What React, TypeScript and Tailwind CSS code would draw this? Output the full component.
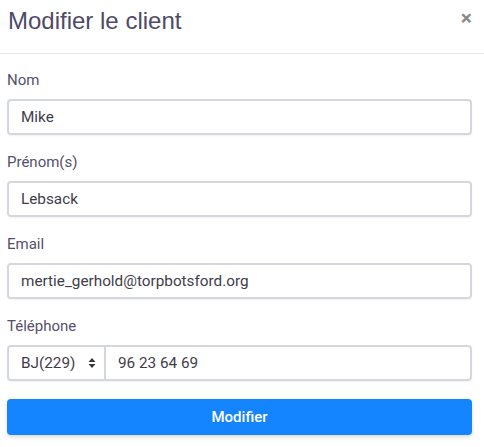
import React from "react";

function Field({ label, value }: { label: string; value: string }) {
  return (
    <div className="flex flex-col">
      <label className="text-[15px] leading-[21px] text-[#55506a] mb-[8px]">{label}</label>
      <div className="h-[36px] border-2 border-[#d4d8de] rounded-[4px] flex items-center px-[12px] text-[15.3px] text-[#3f3d4a] shadow-[0_1px_2px_rgba(0,0,0,0.06)]">
        {value}
      </div>
    </div>
  );
}

export default function App() {
  return (
    <div className="w-[484px] h-[447px] bg-white" style={{ fontFamily: "Roboto, 'Liberation Sans', sans-serif" }}>
      <div className="h-[54px] border-b border-[#e6e6e9] flex items-start justify-between pl-[8px] pr-[12px] pt-[6px]">
        <h1 className="text-[24px] leading-[30px] text-[#4f4a68]" style={{ fontFamily: "'Liberation Sans', Arial, sans-serif" }}>Modifier le client</h1>
        <span className="text-[21px] font-bold text-[#8a8a8a] leading-[20px] mt-[2px]">×</span>
      </div>
      <div className="pl-[7px] pr-[12px] pt-[16px] flex flex-col gap-[17px]">
        <Field label="Nom" value="Mike" />
        <Field label="Prénom(s)" value="Lebsack" />
        <Field label="Email" value="mertie_gerhold@torpbotsford.org" />
        <div className="flex flex-col">
          <label className="text-[15px] leading-[21px] text-[#55506a] mb-[8px]">Téléphone</label>
          <div className="h-[36px] border-2 border-[#d4d8de] rounded-[4px] flex items-stretch text-[15.3px] text-[#3f3d4a] shadow-[0_1px_2px_rgba(0,0,0,0.06)]">
            <div className="w-[97px] flex items-center justify-between pl-[12px] pr-[8px] border-r-2 border-[#d4d8de]">
              <span>BJ(229)</span>
              <svg width="8" height="12" viewBox="0 0 8 12" className="text-[#3a3a3a]">
                <path d="M4 1 L7.5 5 H0.5 Z" fill="currentColor" />
                <path d="M4 11 L7.5 7 H0.5 Z" fill="currentColor" />
              </svg>
            </div>
            <div className="flex items-center pl-[12px]">96 23 64 69</div>
          </div>
        </div>
        <button className="mt-[1px] h-[36px] rounded-[4px] bg-[#1584ff] text-white text-[15px] font-medium shadow-[0_2px_4px_rgba(0,0,0,0.15)]">
          Modifier
        </button>
      </div>
    </div>
  );
}
